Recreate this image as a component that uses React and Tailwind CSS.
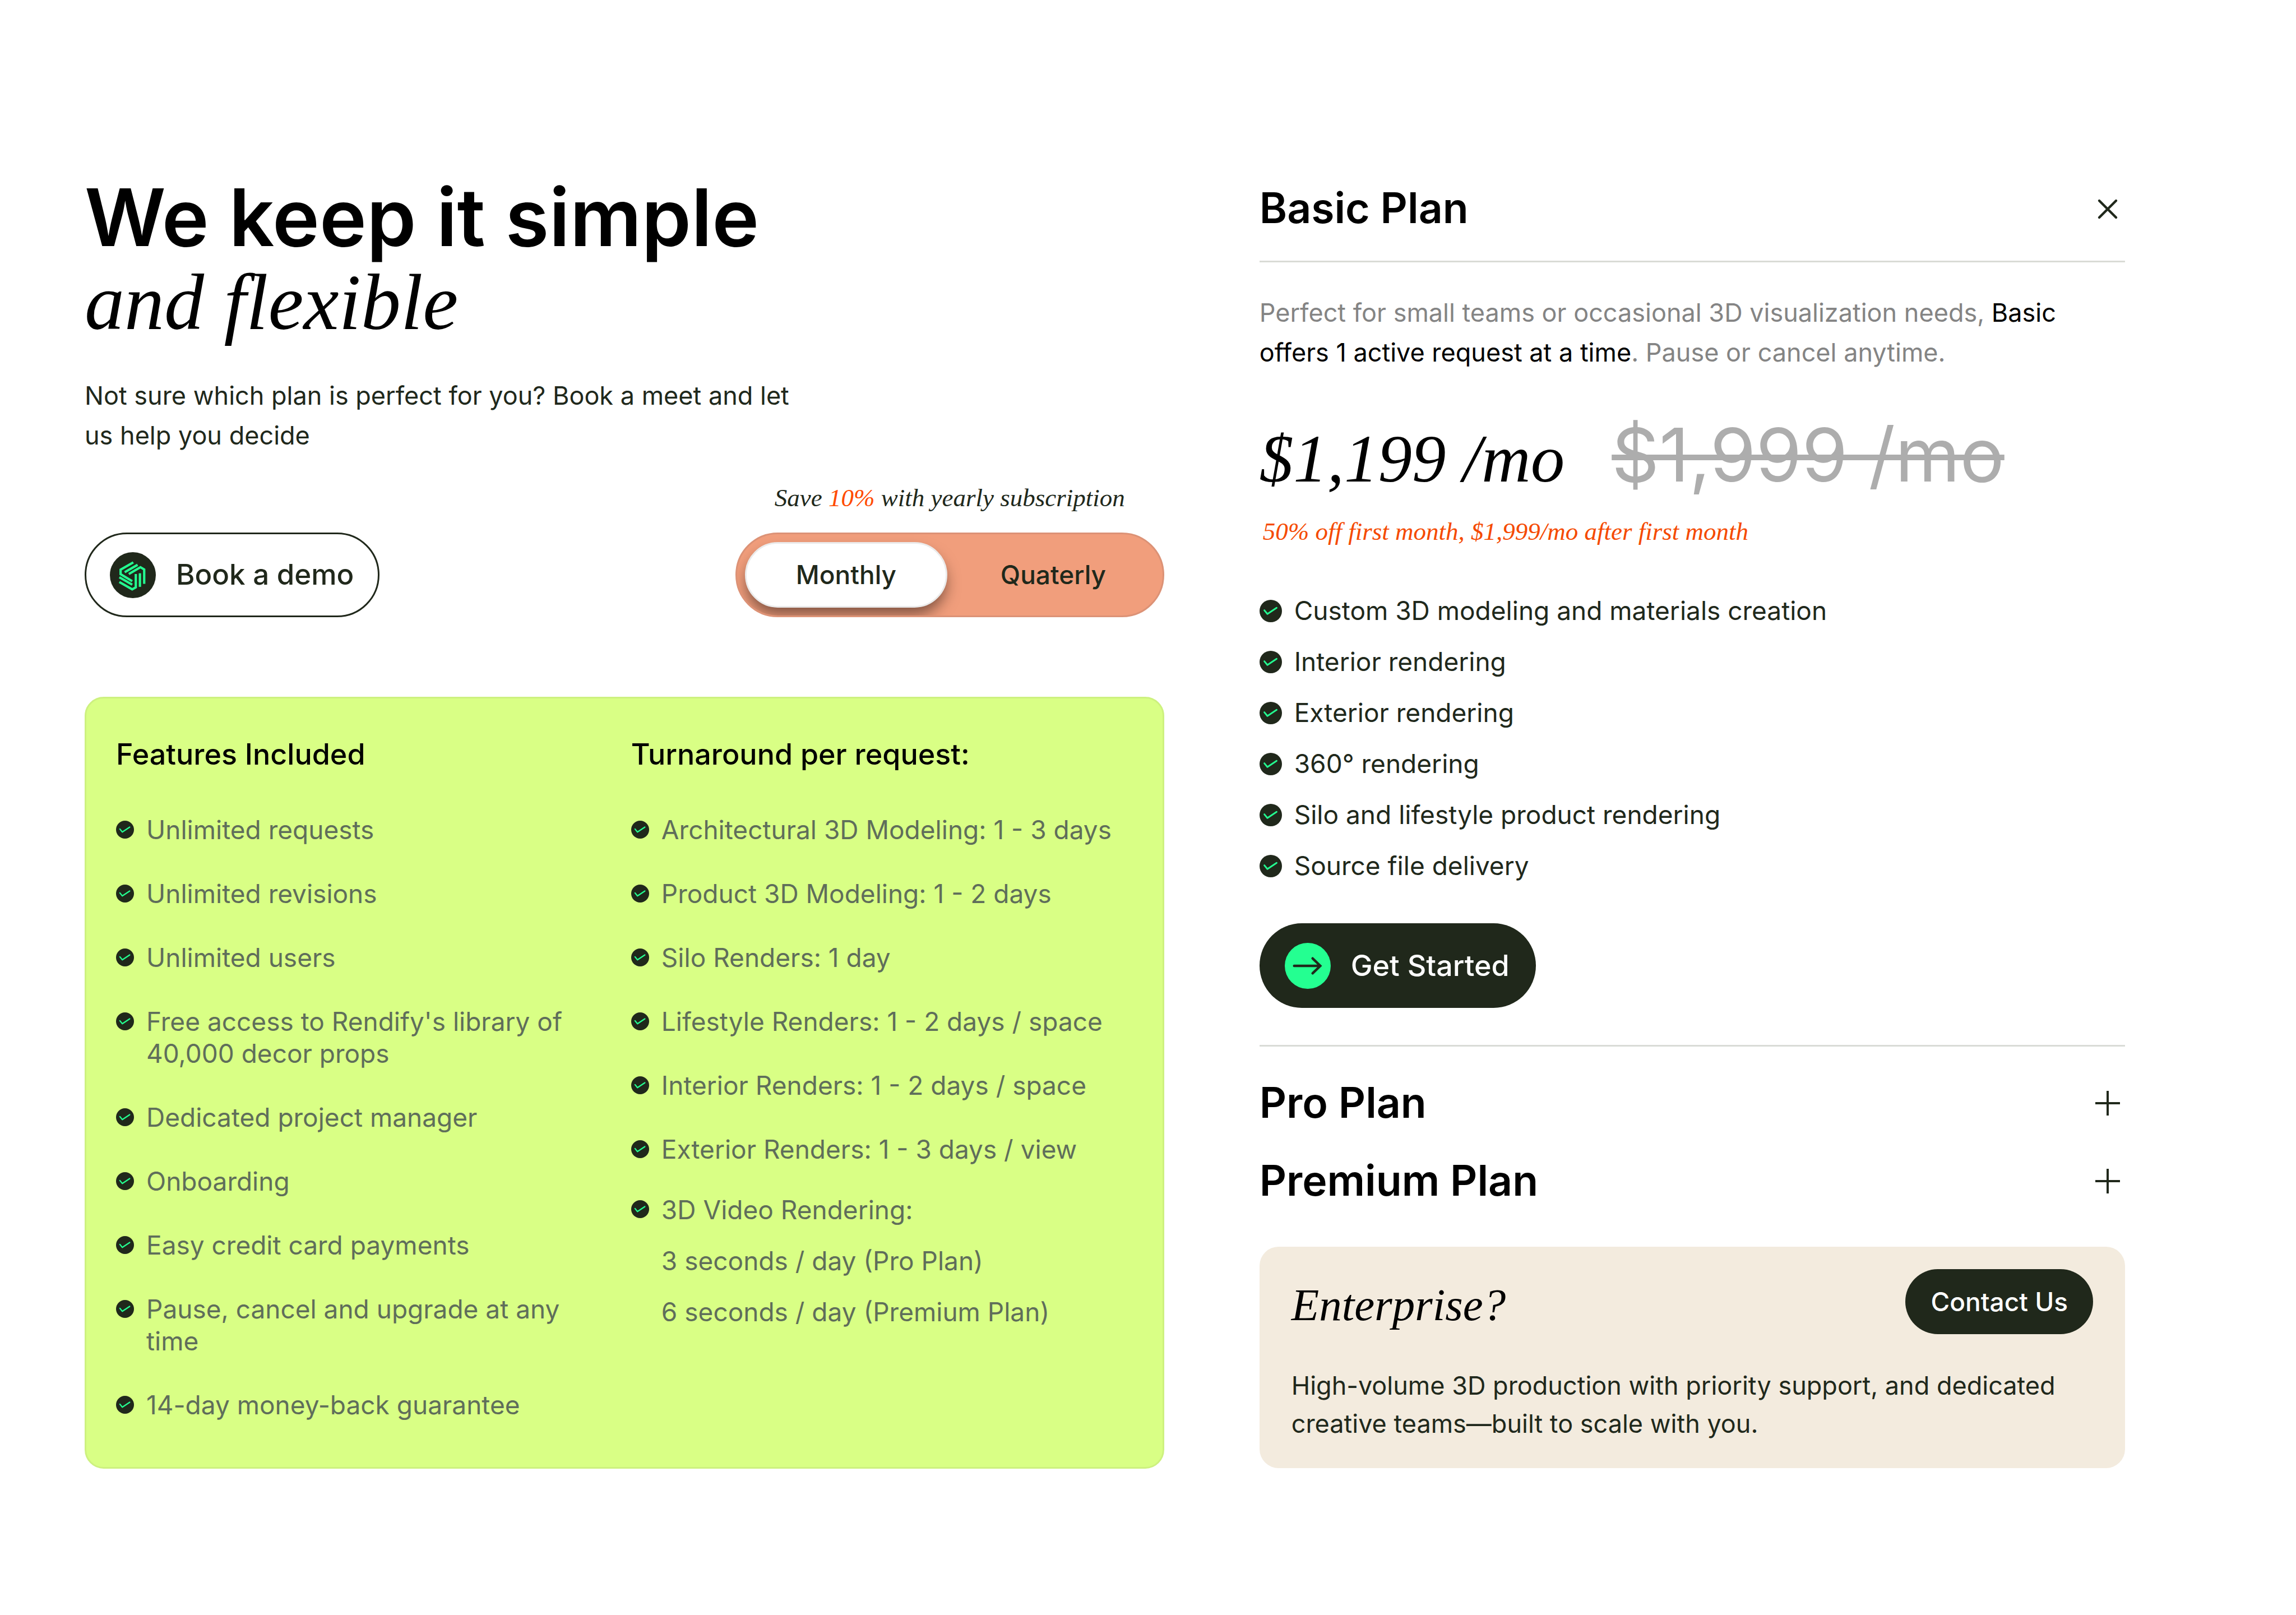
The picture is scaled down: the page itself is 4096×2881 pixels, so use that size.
import { useState } from 'react';

const FEATURES = [
  'Unlimited requests',
  'Unlimited revisions',
  'Unlimited users',
  "Free access to Rendify's library of 40,000 decor props",
  'Dedicated project manager',
  'Onboarding',
  'Easy credit card payments',
  'Pause, cancel and upgrade at any time',
  '14-day money-back guarantee',
];

const TURNAROUND = [
  'Architectural 3D Modeling: 1 - 3 days',
  'Product 3D Modeling: 1 - 2 days',
  'Silo Renders: 1 day',
  'Lifestyle Renders: 1 - 2 days / space',
  'Interior Renders: 1 - 2 days / space',
  'Exterior Renders: 1 - 3 days / view',
];

const BASIC_PLAN = [
  'Custom 3D modeling and materials creation',
  'Interior rendering',
  'Exterior rendering',
  '360° rendering',
  'Silo and lifestyle product rendering',
  'Source file delivery',
];

function CheckIcon({ className }) {
  return (
    <svg viewBox="0 0 42 42" fill="none" aria-hidden="true" className={className}>
      <circle cx="21" cy="21" r="21" fill="#20281b" />
      <path d="M9 19.5L14.7 26.5L32 15" stroke="#24ff91" strokeWidth="3" strokeLinecap="round" strokeLinejoin="round" />
    </svg>
  );
}

function LogoIcon() {
  return (
    <svg viewBox="0 0 257 257" fill="none" aria-hidden="true" className="size-[82px] shrink-0">
      <circle cx="128.5" cy="128.5" r="128.5" fill="#20281b" />
      <g stroke="#24ff91" strokeWidth="13">
        <path d="M131 57L60 98V123L125 162" />
        <path d="M155 71L83 112" />
        <path d="M192 177V97L171 84L106 122" />
        <path d="M168 118V194" />
        <path d="M53 167L125 208L145 197V122" />
        <path d="M53 140L125 182" />
      </g>
    </svg>
  );
}

function ArrowIcon() {
  return (
    <svg viewBox="0 0 86 86" fill="none" aria-hidden="true" className="size-[82px] shrink-0">
      <circle cx="43" cy="43" r="43" fill="#24ff91" />
      <path d="M17.5 43H66M52 29L66.5 43L52 57" stroke="#20281b" strokeWidth="4.6" strokeLinecap="round" />
    </svg>
  );
}

function CloseIcon() {
  return (
    <svg viewBox="0 0 48 48" fill="none" aria-hidden="true" className="size-[48px]">
      <path d="M9 11L39 41M39 11L9 41" stroke="#20281b" strokeWidth="4.4" strokeLinecap="round" />
    </svg>
  );
}

function PlusIcon() {
  return (
    <svg viewBox="0 0 48 48" fill="none" aria-hidden="true" className="size-[48px]">
      <path d="M24 3V47M2 25H46" stroke="#20281b" strokeWidth="4" />
    </svg>
  );
}

function PlanHeader({ name, open, className }) {
  return (
    <h2 className={className}>
      <button
        aria-expanded={open}
        className="flex w-full items-center justify-between pr-[7px] text-left text-[75px] leading-[88px] font-semibold text-black"
      >
        {name}
        {open ? <CloseIcon /> : <PlusIcon />}
      </button>
    </h2>
  );
}

function CardItem({ children }) {
  return (
    <li className="flex items-start gap-[22px]">
      <CheckIcon className="mt-[12px] size-[32px] shrink-0" />
      <span>{children}</span>
    </li>
  );
}

function BillingToggle() {
  const [period, setPeriod] = useState('Monthly');

  return (
    <div className="flex h-[151px] w-[765px] gap-[8px] overflow-hidden rounded-full border-3 border-[#dc9276] bg-[#f19e7c] p-[14px]">
      {['Monthly', 'Quaterly'].map((name) => (
        <button
          key={name}
          aria-pressed={period === name}
          onClick={() => setPeriod(name)}
          className={`flex-1 rounded-full border-3 text-[46px] font-medium ${
            period === name
              ? 'border-[#ebebeb] bg-white shadow-[0_15px_26px_-3px_rgba(32,20,16,0.55)]'
              : 'border-transparent'
          }`}
        >
          {name}
        </button>
      ))}
    </div>
  );
}

export default function App() {
  return (
    <main className="grid min-h-screen grid-cols-[1.247fr_1fr] content-start gap-[170px] bg-white pt-[313px] pr-[305px] pb-[200px] pl-[151px] font-['Inter',sans-serif] text-[#20281b]">
      <section>
        <h1 className="text-[142px] leading-[148px] font-semibold text-black">
          We keep it simple
          <br />
          <em className="font-['Liberation_Serif',serif] leading-none font-normal italic">and flexible</em>
        </h1>
        <p className="mt-[60px] max-w-[1290px] text-[45px] leading-[71px]">
          Not sure which plan is perfect for you? Book a meet and let us help you decide
        </p>

        <div className="mt-[52px] flex items-end justify-between">
          <button className="flex h-[151px] items-center gap-[36px] rounded-full border-3 border-[#20281b] pr-[43px] pl-[42px] text-[51px] font-medium">
            <LogoIcon />
            Book a demo
          </button>
          <div className="flex flex-col items-center gap-[38px]">
            <p className="font-['Liberation_Serif',serif] text-[45px] leading-[48px] italic">
              Save <span className="text-[#ff4b00]">10%</span> with yearly subscription
            </p>
            <BillingToggle />
          </div>
        </div>

        <div className="mt-[142px] grid grid-cols-2 gap-[24px] rounded-[34px] border-3 border-[#cdf17f] bg-[#d9ff85] px-[53px] pt-[68px] pb-[82px] text-[46px] leading-[57px] text-[#5f6e5a]">
          <div>
            <h3 className="text-[52px] leading-[64px] font-medium text-black">Features Included</h3>
            <ul className="mt-[74px] flex flex-col gap-[57px] pr-[56px]">
              {FEATURES.map((item) => (
                <CardItem key={item}>{item}</CardItem>
              ))}
            </ul>
          </div>
          <div>
            <h3 className="text-[52px] leading-[64px] font-medium text-black">Turnaround per request:</h3>
            <ul className="mt-[74px] flex flex-col gap-[57px]">
              {TURNAROUND.map((item) => (
                <CardItem key={item}>{item}</CardItem>
              ))}
            </ul>
            <div className="mt-[34px] flex items-start gap-[22px] leading-[91px]">
              <CheckIcon className="mt-[28px] size-[32px] shrink-0" />
              <p>
                3D Video Rendering:
                <br />
                3 seconds / day (Pro Plan)
                <br />
                6 seconds / day (Premium Plan)
              </p>
            </div>
          </div>
        </div>
      </section>

      <section className="pt-[14px]">
        <PlanHeader name="Basic Plan" open className="border-b-3 border-[#d9dbd6] pb-[50px]" />
        <p className="mt-[54px] text-[45px] leading-[71px] text-[#848484]">
          Perfect for small teams or occasional 3D visualization needs,{' '}
          <span className="text-black">Basic offers 1 active request at a time</span>. Pause or cancel anytime.
        </p>
        <div className="mt-[72px] flex items-baseline gap-[84px] leading-[150px]">
          <span className="font-['Liberation_Serif',serif] text-[121px] text-black italic">$1,199 /mo</span>
          <s className="text-[132px] text-[#adadad] decoration-[10px]">$1,999 /mo</s>
        </div>
        <p className="mt-[25px] pl-[6px] font-['Liberation_Serif',serif] text-[45px] leading-[60px] text-[#f54a00] italic">
          50% off first month, $1,999/mo after first month
        </p>

        <ul className="mt-[66px] text-[46px] leading-[91px]">
          {BASIC_PLAN.map((item) => (
            <li key={item} className="flex items-center gap-[22px]">
              <CheckIcon className="size-[40px] shrink-0" />
              {item}
            </li>
          ))}
        </ul>
        <button className="mt-[57px] flex h-[151px] items-center gap-[36px] rounded-full bg-[#20281b] pr-[47px] pl-[45px] text-[52px] font-medium text-white">
          <ArrowIcon />
          Get Started
        </button>

        <div className="mt-[66px] flex flex-col gap-[51px] border-t-3 border-[#d9dbd6] pt-[56px]">
          <PlanHeader name="Pro Plan" open={false} />
          <PlanHeader name="Premium Plan" open={false} />
        </div>

        <div className="mt-[74px] rounded-[34px] bg-[#f3ebde] px-[57px] pt-[40px] pb-[45px]">
          <div className="flex items-end justify-between">
            <h3 className="font-['Liberation_Serif',serif] text-[81px] leading-[104px] text-black italic">Enterprise?</h3>
            <button className="h-[116px] rounded-full bg-[#20281b] px-[45px] text-[46px] font-medium text-white">
              Contact Us
            </button>
          </div>
          <p className="mt-[58px] text-[45px] leading-[68px]">
            High-volume 3D production with priority support, and dedicated creative teams—built to scale with you.
          </p>
        </div>
      </section>
    </main>
  );
}
